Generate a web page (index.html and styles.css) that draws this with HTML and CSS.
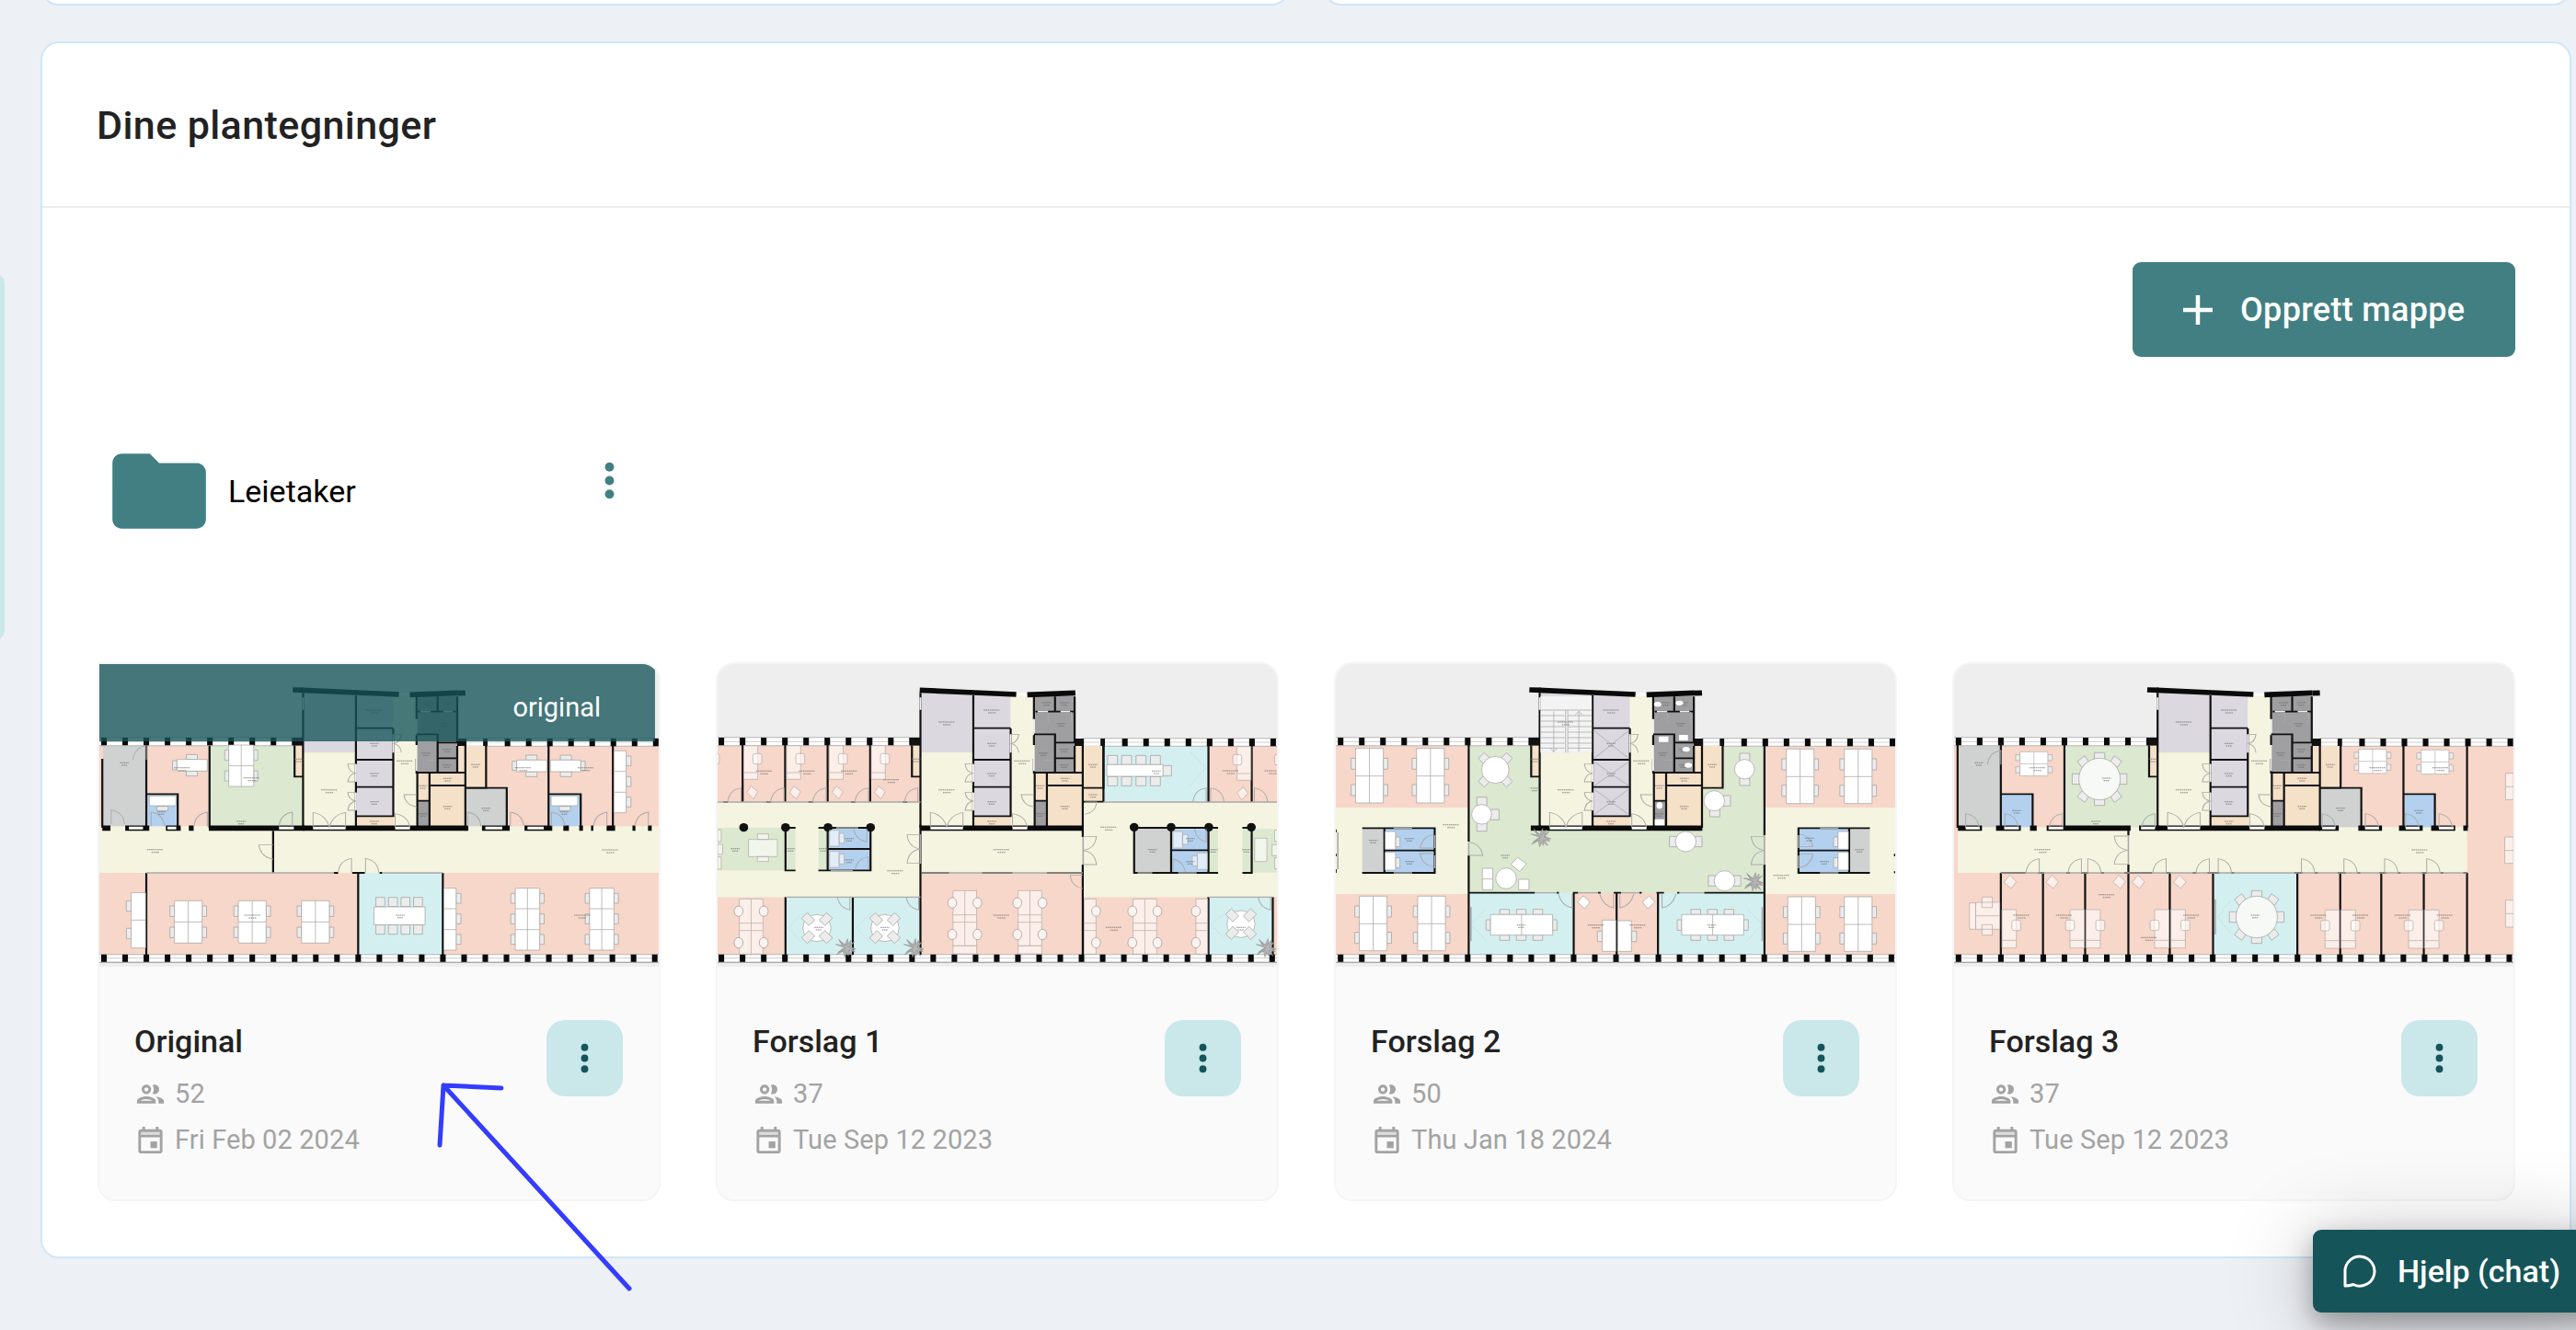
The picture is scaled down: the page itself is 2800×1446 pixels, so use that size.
FILE: index.html
```
<!DOCTYPE html>
<html lang="no">
<head>
<meta charset="utf-8">
<title>Dine plantegninger</title>
<link rel="stylesheet" href="styles.css">
</head>
<body>
<svg class="defs" width="0" height="0" aria-hidden="true">
  <defs>
    <!-- Furniture -->
    <g id="d4" class="furn">
      <path class="chair" d="M-12 17h12v34h-12zM-12 86h12v34h-12zM75 17h12v34h-12zM75 86h12v34h-12z"/>
      <path d="M0 0h75v138H0zM37.500 0v138M0 69h75"/>
    </g>
    <g id="d4t" class="furn">
      <path class="chair" d="M-12 32h12v36h-12zM-12 118h12v36h-12zM75 32h12v36h-12zM75 118h12v36h-12z"/>
      <path d="M0 0h75v178H0zM37.500 0v178M0 90h75"/>
    </g>
    <g id="d6" class="furn">
      <path class="chair" d="M-12 17h12v32h-12zM-12 84h12v32h-12zM-12 151h12v32h-12zM66 17h12v32h-12zM66 84h12v32h-12zM66 151h12v32h-12z"/>
      <path d="M0 0h66v202H0zM33 0v202M0 67h66M0 135h66"/>
    </g>
    <g id="d3" class="furn">
      <path class="chair" d="M33 17h13v32h-13zM33 84h13v32h-13zM33 151h13v32h-13z"/>
      <path d="M0 0h33v202H0zM0 67h33M0 135h33"/>
    </g>
    <g id="soft" class="furn tint">
      <path d="M0 0h64v180H0zM32 0v180M0 79h64M0 103h64"/>
      <g class="seat"><ellipse cx="-2" cy="40" rx="12" ry="17"/><ellipse cx="66" cy="40" rx="12" ry="17"/>
      <ellipse cx="-2" cy="143" rx="12" ry="17"/><ellipse cx="66" cy="143" rx="12" ry="17"/></g>
    </g>
    <g id="softHalf" class="furn tint">
      <path d="M0 0h32v180H0zM0 79h32M0 103h32"/>
      <g class="seat"><ellipse cx="32" cy="40" rx="12" ry="17"/><ellipse cx="32" cy="143" rx="12" ry="17"/></g>
    </g>
    <g id="deskH" class="furn">
      <path class="chair" d="M25-16h30v16h-30zM25 38h30v16h-30zM-12 4h12v30h-12z"/>
      <path d="M0 0h82v38H0z"/>
    </g>
    <g id="office" class="furn tint">
      <path d="M0 0h39v125H0zM0 100h39"/><rect x="27" y="34" width="24" height="34" rx="6"/>
    </g>
    <g id="cell" class="furn tint">
      <path d="M0 0h38v110H0zM0 88h38"/><rect x="25" y="26" width="24" height="34" rx="6"/>
      <path d="M8 152l12-20 18 18-12 24z"/>
    </g>
    <g id="lounge" class="furn tint"><path d="M0 24l16-24 18 22-14 22z"/></g>
    <g id="meet" class="furn">
      <path class="chair" d="M5-31h24v30H5zM39-31h24v30H39zM73-31h24v30H73zM107-31h24v30h-24zM5 59h24v30H5zM39 59h24v30H39zM73 59h24v30H73zM107 59h24v30h-24z"/>
      <path d="M0 0h138v58H0z"/>
    </g>
    <g id="meetL" class="furn">
      <path class="chair" d="M25-17h26v17H25zM70-17h26v17H70zM115-17h26v17h-26zM25 67h26v17H25zM70 67h26v17H70zM115 67h26v17h-26zM-12 17h12v34h-12zM168 17h12v34h-12z"/>
      <path d="M0 0h168v67H0zM84 0v67"/>
    </g>
    <g id="round4" class="furn">
      <path class="chair" d="M-46-38l16-18 18 22-16 20zM46-38l-16-18-18 22 16 20zM-46 38l16 18 18-22-16-20zM46 38l-16 18-18-22 16-20z"/>
      <ellipse rx="37" ry="44"/>
    </g>
    <g id="club4" class="furn">
      <ellipse rx="38" ry="44"/>
      <path class="chair" d="M-42-32l16-18 20 24-16 18zM42-32l-16-18-20 24 16 18zM-42 32l16 18 20-24-16-18zM42 32l-16 18-20-24 16-18z"/>
    </g>
    <g id="round8" class="furn tint">
      <path class="chair" d="M-14-86h28v22h-28zM-14 64h28v22h-28zM-74-17h20v34h-20zM54-17h20v34h-20zM-60-58l20-18 10 18-18 20zM60-58l-20-18-10 18 18 20zM-60 58l20 18 10-18-18-20zM60 58l-20 18-10-18 18-20z"/>
      <ellipse class="top" rx="56" ry="68"/>
    </g>
    <g id="round2" class="furn">
      <path class="chair" d="M-44-17h20v34h-20zM24-17h20v34h-20z"/><ellipse rx="28" ry="33"/>
    </g>
    <g id="booth" class="furn"><path class="chair" d="M28 18h12v32h-12z"/><path d="M0 0h28v58H0z"/></g>
    <g id="plant" class="plant">
      <path d="M0 0L-26-12-8-8-18-28-2-10 6-30 8-10 24-20 12-4 28 4 10 6 20 26 4 12-2 30-6 10-24 22-10 4z"/>
      <path d="M0 0L-16-22 2-8 16-26 10-2 26 12 8 8 8 26-2 8-20 14z"/>
    </g>
    <!-- Door leaf with its swing -->
    <path id="dr" class="door" d="M0 0v-46c-22 4-34 22-36 46"/>
    <path id="dl" class="door" d="M0 0v-46c22 4 34 22 36 46"/>
    <path id="dd" class="door" d="M0-46h-36c2 24 14 42 36 46M0 46h-36c2-24 14-42 36-46"/>
    <path id="lb" class="label" d="M-22 0h44M-10 9h22"/>
    <path id="ls" class="label" d="M-12 0h24M-8 8h16"/>

    <!-- Outer walls shared by every storey -->
    <g id="shell">
      <path class="glass" d="M-30 275H573v27H-30zM1013 278H1640v26H1013zM-30 983H1640v26H-30z"/>
      <path class="thin" d="M-30 289H573M1013 291H1640M-30 995H1640"/>
      <path class="pillars" d="M27 288.500H560M1118.500 291.500H1640M27 995.500H1640"/>
      <path class="base" d="M-30 1009H1640"/>
      <path class="fill-wall" d="M546 276h27v26h-27zM988 279h27v24h-27zM1060 279h12v24h-12z"/>
    </g>
    <!-- Stair and lift core -->
    <g id="core">
      <path class="lilac" d="M573 128L715 136V325H573zM715 138H817V532H715z"/>
      <path class="cream" d="M573 325H715V570H573zM817 142H882V570H817z"/>
      <path class="dark" d="M882 140H990V292H937V390H882zM937 292H990V390H937zM883 483H915V565H883z"/>
      <path class="tan" d="M718 535H817V565H718zM883 392H913V480H883zM918 392H1012V565H918zM990 303H1012V390H990zM1013 303H1068V440H1013zM550 302H571V402H550z"/>
      <path class="wall" d="M573 130V570M716 138V570M716 245H817M817 246V348H716M716 437H817V350M817 437V532H716M880 142V215M880 265H937V292H990V142M937 142V190M884 191H990M937 292V388M937 343H990M880 268V300M880 345V390H1012M915 390V570M918 432H1012M882 392V570M882 482H913M990 303V390M1012 303V570M1013 440H1068V303M550 302V403H573"/>
      <path class="light" d="M573 145v40M817 265v60M880 216v44M880 345v40M890 191h28M952 191h26M716 362v58M716 455v58"/>
      <path class="slab" d="M573 571H1013"/>
      <path class="opening" d="M600 571h88M822 571h40"/>
      <path class="roof" d="M571 121L718 129 832 135M862 136L992 130"/>
      <path class="opening" d="M834 135h26"/>
      <path class="door" d="M600 566v-46c22 4 40 22 44 50 4-28 22-46 44-50v46M716 362h-22c2 20 10 28 22 30-12 2-20 10-22 28h22M716 455h-22c2 18 10 26 22 28-12 2-20 10-22 30h22M817 265h22c-2 18-10 28-22 30 12 2 20 10 22 30M822 568v-44c22 4 36 18 40 44M880 462h-34c2 22 14 36 34 40M918 196v30M981 192v32M908 256h-24M932 350h-24"/>
      <use href="#lb" x="766" y="186"/><use href="#ls" x="766" y="295"/><use href="#ls" x="766" y="393"/><use href="#ls" x="766" y="485"/>
      <use href="#lb" x="644" y="446"/><use href="#lb" x="848" y="352"/><use href="#ls" x="766" y="549"/><use href="#ls" x="897" y="433"/><use href="#ls" x="964" y="409"/><use href="#ls" x="964" y="500"/><use href="#ls" x="954" y="230"/><use href="#ls" x="906" y="326"/><use href="#ls" x="962" y="314"/><use href="#ls" x="962" y="365"/><use href="#ls" x="897" y="524"/><use href="#ls" x="914" y="162"/><use href="#ls" x="962" y="162"/><use href="#ls" x="1040" y="364"/><use href="#ls" x="561" y="346"/>
    </g>
    <path id="eaves" class="roof" d="M543 120L573 121M990 131L1010 130"/>

    <!-- UI icons -->
    <symbol id="i-more" viewBox="0 0 24 24"><circle cx="12" cy="6" r="2"/><circle cx="12" cy="12" r="2"/><circle cx="12" cy="18" r="2"/></symbol>
    <symbol id="i-people" viewBox="0 0 24 24"><path d="M9 13.750c-2.340 0-7 1.170-7 3.500V19h14v-1.750c0-2.330-4.660-3.500-7-3.500zM4.340 17c.84-.58 2.870-1.250 4.660-1.250s3.820.67 4.660 1.250H4.340zM9 12c1.930 0 3.500-1.570 3.500-3.500S10.930 5 9 5 5.500 6.570 5.500 8.500 7.070 12 9 12zm0-5c.83 0 1.500.67 1.500 1.500S9.830 10 9 10s-1.500-.67-1.500-1.500S8.170 7 9 7zm7.040 6.810c1.160.84 1.960 1.960 1.960 3.440V19h4v-1.750c0-2.020-3.500-3.170-5.960-3.440zM15 12c1.930 0 3.500-1.570 3.500-3.500S16.930 5 15 5c-.54 0-1.040.13-1.500.35.63.89 1 1.980 1 3.150s-.37 2.260-1 3.150c.46.22.96.35 1.500.35z"/></symbol>
    <symbol id="i-event" viewBox="0 0 24 24"><path opacity=".35" d="M5 6h14v2H5z"/><path d="M12 13h5v5h-5zM19 4h-1V2h-2v2H8V2H6v2H5c-1.110 0-1.990.9-1.990 2L3 20c0 1.100.89 2 2 2h14c1.100 0 2-.9 2-2V6c0-1.100-.9-2-2-2zm0 16H5V10h14v10zm0-12H5V6h14v2z"/></symbol>
  </defs>
</svg>

<div class="side-tab"></div>
<main class="page">
  <div class="top-cards"><div class="top-card"></div><div class="top-card"></div></div>

  <section class="panel">
    <header class="panel-head"><h2>Dine plantegninger</h2></header>
    <div class="panel-body">
      <div class="toolbar">
        <button class="create">
          <svg class="plus" viewBox="0 0 32 32"><path d="M16 0v32M0 16h32"/></svg>
          <span>Opprett mappe</span>
        </button>
      </div>

      <div class="folder">
        <svg class="folder-icon" viewBox="0 0 24 24"><path d="M10 4H4c-1.100 0-1.990.9-1.990 2L2 18c0 1.100.9 2 2 2h16c1.100 0 2-.9 2-2V8c0-1.100-.9-2-2-2h-8l-2-2z"/></svg>
        <span class="folder-name">Leietaker</span>
        <svg class="folder-more"><use href="#i-more"/></svg>
      </div>

      <div class="cards">
        <article class="card first">
          <div class="thumb">
            <svg class="plan" viewBox="20 36 1513 987" preserveAspectRatio="none">
              <path class="pink" d="M0 302H1600V570H0zM0 717H1600V984H0z"/>
              <path class="cream" d="M0 565H1600V717H0z"/>
              <path class="gray" d="M30 302H147V565H30zM1011 440H1122V565H1011z"/>
              <path class="blue" d="M148 460H232V565H148zM1236 460H1322V565H1236z"/>
              <path class="green" d="M318 302H571V565H318z"/>
              <path class="cyan" d="M720 717H949V984H720z"/>
              <use href="#shell" x="-2"/><use href="#core" x="-2"/><use href="#eaves"/>
              <path class="slab" d="M28 571H50M90 571H155M200 571H240M262 571H275M316 571H575M1009 571H1018M1055 571H1130M1170 571H1245M1275 571H1290M1318 571H1328M1350 571H1356M1392 571H1415M1462 571H1470M1504 571H1514"/>
              <path class="opening" d="M100 571h38M204 571h24M506 571h40M1064 571h46M1178 571h44"/>
              <path class="wall" d="M28 345V570M147 290V565M148 460H232V565M318 302V570M1011 440H1122V565M1235 303V565M1236 460H1322V565M1409 303V570M490 580V717M147 984V717M720 717V984M949 717V984M654 717h12M704 717h34M778 717h8"/>
              <path class="frame" d="M147 717H655M784 717H949"/>
              <use href="#d4" transform="translate(370 300) scale(.9 .98)"/>
              <use href="#deskH" x="230" y="347"/><use href="#deskH" x="1149" y="349"/>
              <use href="#deskH" transform="translate(1322 349) scale(-1 1)"/>
              <g class="furn"><path class="chair" d="M176 500h30v14h-30zM1264 500h30v14h-30z"/><path d="M155 466h72v32h-72zM1242 466h72v32h-72z"/></g>
              <use href="#d3" x="1412" y="319"/>
              <g class="furn"><path class="chair" d="M93 808h13v34h-13zM93 898h13v34h-13z"/><path d="M106 782h39v180h-39zM106 871h39"/></g>
              <use href="#d4" x="223" y="808"/><use href="#d4" x="396" y="808"/><use href="#d4" x="567" y="808"/>
              <use href="#meet" x="763" y="828"/>
              <use href="#d3" x="952" y="767"/><use href="#d6" x="1145" y="767"/><use href="#d6" x="1346" y="767"/>
              <use href="#dl" x="52" y="558"/><use href="#dr" x="147" y="348"/><use href="#dl" x="160" y="565"/><use href="#dr" x="312" y="565"/><use href="#dr" x="542" y="565"/><use href="#dl" x="1016" y="565"/><use href="#dl" x="1132" y="565"/><use href="#dl" x="1243" y="565"/><use href="#dr" x="1393" y="565"/><use href="#dr" x="1505" y="565"/><use href="#dr" x="702" y="716"/><use href="#dl" x="740" y="716"/>
              <path class="door" d="M490 626h-39c4 26 16 42 39 46"/>
              <use href="#ls" x="88" y="358"/><use href="#lb" x="432" y="407"/><use href="#ls" x="404" y="549"/><use href="#lb" x="171" y="641"/><use href="#lb" x="1402" y="642"/><use href="#lb" x="434" y="855"/><use href="#ls" x="834" y="855"/><use href="#lb" x="1326" y="855"/><use href="#ls" x="1066" y="506"/><use href="#lb" x="244" y="374"/><use href="#lb" x="1166" y="374"/><use href="#lb" x="1336" y="374"/><use href="#ls" x="188" y="518"/><use href="#ls" x="1278" y="518"/>
            </svg>
            <div class="ribbon">original</div>
          </div>
          <div class="info">
            <div class="text"><h3>Original</h3>
              <p class="meta"><svg><use href="#i-people"/></svg>52</p>
              <p class="meta"><svg><use href="#i-event"/></svg>Fri Feb 02 2024</p></div>
            <button class="more"><svg><use href="#i-more"/></svg></button>
          </div>
        </article>

        <article class="card">
          <div class="thumb">
            <svg class="plan" viewBox="24.300 36 1513 987" preserveAspectRatio="none">
              <path class="pink" d="M0 302H573V486H0zM1352 303H1600V486H1352zM0 796H208V984H0zM575 718H1012V984H575zM1013 796H1352V984H1013zM1526 796H1600V984H1526z"/>
              <path class="cream" d="M0 486H573V796H0zM573 570H1013V717H573zM1013 440H1352V796H1013zM1352 486H1600V796H1352z"/>
              <path class="green" d="M0 570H235V709H0zM297 570H322V709H297zM1352 574H1378V716H1352zM1444 574H1600V716H1444z"/>
              <path class="cyan" d="M208 796H573V984H208zM1070 303H1352V484H1070zM1352 796H1526V984H1352z"/>
              <path class="blue" d="M324 572H438V709H324zM1252 574H1352V716H1252z"/>
              <path class="gray" d="M1151 572H1251V716H1151z"/>
              <path class="tan" d="M1014 442H1068V483H1014z"/>
              <use href="#shell"/><use href="#core"/>
              <path class="wall" d="M92 300V486M207 300V486M322 300V486M437 300V486M1068 303V485H1013M1352 303V486M1469 303V486M573 560V984M1012 570V600M1012 690V984M575 717H650M740 717H822M915 717H1012M208 984V796M390 796V984M1352 984V796M1526 796V984M235 570H208V709H235M297 570H438V709H297M322 570V709M324 639H438M1151 570H1352V717H1151zM1251 570V717M1252 643H1352M1352 570H1378M1352 717H1378M1444 570H1469V717H1444M40 486h12M156 486h12M270 486h12M385 486h12M525 486h12"/>
              <path class="frame" d="M24 486H573M1068 486H1537M208 796H573M1352 796H1526M575 717H1012M573 592v95M1013 600v90M345 570h60M330 709h60M1160 717h40M1270 717h50"/>
              <g class="fill-wall"><ellipse cx="95" cy="569" rx="12" ry="14"/><ellipse cx="208" cy="569" rx="12" ry="14"/><ellipse cx="323" cy="569" rx="12" ry="14"/><ellipse cx="438" cy="569" rx="12" ry="14"/><ellipse cx="1151" cy="568" rx="12" ry="14"/><ellipse cx="1251" cy="568" rx="12" ry="14"/><ellipse cx="1353" cy="568" rx="12" ry="14"/><ellipse cx="1468" cy="568" rx="12" ry="14"/></g>
              <use href="#cell" x="-20" y="302"/><use href="#cell" x="95" y="302"/><use href="#cell" x="211" y="302"/><use href="#cell" x="326" y="302"/><use href="#cell" x="440" y="302"/>
              <use href="#cell" transform="translate(1467 305) scale(-1 1)"/><use href="#cell" transform="translate(1580 305) scale(-1 1)"/>
              <g class="furn"><path class="chair" d="M1079 334h27v30h-27zM1117 334h27v30h-27zM1156 334h27v30h-27zM1195 334h27v30h-27zM1079 403h27v30h-27zM1117 403h27v30h-27zM1156 403h27v30h-27zM1195 403h27v30h-27zM1228 367h24v34h-24z"/><path d="M1077 364h152v38h-152z"/></g>
              <g class="furn tint"><path d="M108 608h78v56h-78zM132 590h30v18h-30zM132 664h30v16h-30zM24 577h10v38H24zM24 624h14v32H24zM24 665h10v40H24zM1477 604h33v76h-33zM1531 578h12v36h-12zM1524 625h20v36h-20zM1531 668h12v36h-12z"/></g>
              <g class="furn tint"><path d="M327 578h26v52h-26zM353 588h14v32h-14zM327 647h26v52h-26zM353 656h14v32h-14zM1256 582h26v54h-26zM1282 592h14v32h-14zM1322 652h27v54h-27zM1308 662h14v32h-14z"/></g>
              <use href="#soft" x="83" y="802"/><use href="#soft" x="661" y="775"/><use href="#soft" x="837" y="775"/><path class="furn tint" d="M661 955h64v26h-64zM837 955h64v26h-64z"/>
              <use href="#softHalf" x="1016" y="802"/><use href="#soft" x="1148" y="802"/><use href="#softHalf" transform="translate(1350 802) scale(-1 1)"/>
              <use href="#club4" x="293" y="897"/><use href="#club4" x="477" y="897"/><use href="#club4" x="1440" y="884"/>
              <path class="sight" d="M252 850L216 896 252 945M436 850L400 896 436 945M1305 325L1345 375 1305 430M1395 850L1360 884 1395 935"/>
              <use href="#plant" x="370" y="962"/><use href="#plant" x="554" y="962"/><use href="#plant" x="1507" y="962"/>
              <use href="#dr" x="88" y="486"/><use href="#dr" x="204" y="486"/><use href="#dr" x="318" y="486"/><use href="#dr" x="432" y="486"/><use href="#dr" x="566" y="486"/><use href="#dr" x="1346" y="486"/><use href="#dl" x="1358" y="486"/><use href="#dl" x="1476" y="486"/>
              <use href="#dd" x="573" y="639"/><use href="#dd" transform="translate(1013 644) scale(-1 1)"/>
              <path class="door" d="M382 796v42c-20-4-30-20-34-42M568 796v42c-20-4-30-20-34-42M1520 796v42c-20-4-30-20-34-42M1012 724h-34c2 24 14 40 34 44M1018 486h32c-2 22-14 36-32 40M428 574v42c-20-4-32-20-36-42M432 706v-42c-20 4-32 20-36 42M1346 574v42c-18-4-28-20-32-42M1256 714v-42c20 4 30 20 34 42"/>
              <use href="#lb" x="644" y="225"/><use href="#lb" x="792" y="641"/><use href="#lb" x="792" y="855"/><use href="#lb" x="1096" y="895"/><use href="#lb" x="505" y="710"/><use href="#lb" x="1082" y="568"/><use href="#ls" x="72" y="638"/><use href="#ls" x="222" y="638"/><use href="#ls" x="310" y="638"/><use href="#ls" x="380" y="605"/><use href="#ls" x="380" y="675"/><use href="#ls" x="1201" y="641"/><use href="#ls" x="1303" y="605"/><use href="#ls" x="1303" y="680"/><use href="#ls" x="1365" y="641"/><use href="#ls" x="1455" y="641"/><use href="#ls" x="298" y="895"/><use href="#ls" x="477" y="895"/><use href="#ls" x="1440" y="895"/><use href="#ls" x="1211" y="385"/><use href="#ls" x="1040" y="462"/><use href="#lb" x="150" y="385"/><use href="#lb" x="266" y="385"/><use href="#lb" x="380" y="385"/><use href="#lb" x="494" y="413"/><use href="#lb" x="1412" y="384"/><use href="#lb" x="1526" y="384"/>
            </svg>
          </div>
          <div class="info">
            <div class="text"><h3>Forslag 1</h3>
              <p class="meta"><svg><use href="#i-people"/></svg>37</p>
              <p class="meta"><svg><use href="#i-event"/></svg>Tue Sep 12 2023</p></div>
            <button class="more"><svg><use href="#i-more"/></svg></button>
          </div>
        </article>

        <article class="card">
          <div class="thumb">
            <svg class="plan" viewBox="28.600 36 1513 987" preserveAspectRatio="none">
              <path class="pink" d="M0 302H388V504H0zM1188 303H1600V504H1188zM0 786H388V984H0zM1188 786H1600V984H1188zM672 783H900V984H672z"/>
              <path class="cream" d="M0 504H388V786H0zM1188 504H1600V786H1188z"/>
              <path class="green" d="M388 302H579V570H1020V303H1188V783H388z"/>
              <path class="cyan" d="M388 783H672V984H388zM900 783H1188V984H900z"/>
              <path class="blue" d="M160 572H296V716H160zM1281 572H1417V716H1281z"/>
              <path class="gray" d="M100 572H160V716H100zM1417 572H1473V716H1417z"/>
              <use href="#shell" x="7"/><use href="#core" x="7"/><use href="#eaves" x="9"/>
              <path class="stair" d="M582 140H721V325H582z"/>
              <path class="thin stairs" d="M582 186H721M650 186V325M656 186V325M618 190V322L608 310M618 322L628 310M686 322V190L676 202M686 190L696 202M582 204h66M582 222h66M582 240h66M582 258h66M582 276h66M582 294h66M582 310h66M656 204h65M656 222h65M656 240h65M656 258h65M656 276h65M656 294h65M656 310h65M726 252L822 345M822 252L726 345M726 354L822 434M822 354L726 434M726 443L822 528M822 443L726 528"/>
              <g class="white"><ellipse cx="899" cy="167" rx="10" ry="8"/><ellipse cx="958" cy="163" rx="10" ry="8"/><ellipse cx="976" cy="314" rx="10" ry="8"/><ellipse cx="982" cy="366" rx="10" ry="8"/><ellipse cx="904" cy="497" rx="8" ry="11"/><path d="M902 272h26v18h-26zM957 267h24v18h-24zM891 542h26v20h-26z"/></g>
              <path class="wall" d="M388 290V615M388 660V984M1188 290V595M1188 690V984M388 782H567M626 782H632M670 782H684M738 782H745M780 782H800M850 782H856M896 782H916M952 782H958M1025 782H1188M672 783V984M788 783V984M900 783V984M100 571H296V717H100M160 571V717M160 644H296M1473 571H1280V717H1473M1417 571V717M1281 644H1417M28 575v10M28 655v8M28 705v12M1541 655v8M1541 712v6"/>
              <path class="slab" d="M556 571H584"/>
              <path class="frame" d="M567 782H626M684 782H738M800 782H850M958 782H1025M185 571h50M185 717h50M1338 571h50M1338 717h50M296 594v42M296 660v42M1280 594v42M1280 660v42M388 618v42M1188 598v92M34 585v120M394 828v112M1182 828v112"/>
              <use href="#d4t" x="82" y="311"/><use href="#d4t" x="247" y="311"/><use href="#d4t" x="92" y="793"/><use href="#d4t" x="250" y="793"/>
              <use href="#d4t" x="1247" y="313"/><use href="#d4t" x="1404" y="313"/><use href="#d4t" x="1251" y="795"/><use href="#d4t" x="1404" y="795"/>
              <use href="#booth" x="162" y="582"/><use href="#booth" x="162" y="650"/><use href="#booth" transform="translate(1415 582) scale(-1 1)"/><use href="#booth" transform="translate(1415 650) scale(-1 1)"/>
              <use href="#round4" x="460" y="381"/>
              <g class="furn"><path class="chair" d="M410 470h27v28h-27zM410 553h27v28h-27zM448 510h22v34h-22zM1121 327h27v24h-27zM1121 408h27v24h-27zM1076 465h20v34h-20zM1040 510h27v24h-27z"/><ellipse cx="423" cy="526" rx="27" ry="32"/><ellipse cx="1134" cy="379" rx="27" ry="32"/><ellipse cx="1052" cy="482" rx="28" ry="33"/><ellipse cx="489" cy="735" rx="28" ry="34"/><path d="M425 702h28v70h-28zM425 737h28M523 738h28v34h-28zM502 689l18-22 24 20-18 26z"/></g>
              <use href="#round2" x="975" y="615"/><use href="#round2" x="1080" y="743"/>
              <use href="#meetL" x="447" y="853"/><use href="#meetL" x="964" y="853"/>
              <path class="sight" d="M434 835L394 885 434 938M1142 835L1182 885 1142 938"/>
              <g class="furn"><path class="chair" d="M736 907h13v34h-13zM829 907h13v34h-13z"/><path d="M749 871h37v102h-37zM791 873h37v100h-37zM682 812l16-20 18 20-14 22zM892 812l-16-20-18 20 14 22z"/></g>
              <use href="#plant" x="582" y="602"/><use href="#plant" x="1158" y="746"/>
              <use href="#dd" x="1188" y="644"/>
              <path class="door" d="M388 660h38c-4-24-16-40-38-43M668 785v46c-20-4-32-20-38-46M780 785v46c-20-4-32-20-38-46M797 785v46c20-4 32-20 38-46M911 785v46c20-4 32-20 38-46M294 636h-38c4-26 16-40 38-44M294 654h-38c4 26 16 40 38 44M1283 632h36c-4-24-16-38-36-42M1283 656h36c-4 26-16 40-36 44"/>
              <use href="#lb" x="650" y="225"/><use href="#lb" x="340" y="560"/><use href="#ls" x="130" y="611"/><use href="#ls" x="228" y="605"/><use href="#ls" x="228" y="680"/><use href="#ls" x="487" y="660"/><use href="#ls" x="530" y="887"/><use href="#ls" x="1045" y="887"/><use href="#lb" x="732" y="887"/><use href="#lb" x="845" y="887"/><use href="#ls" x="567" y="441"/><use href="#ls" x="1310" y="604"/><use href="#ls" x="1350" y="680"/><use href="#ls" x="1445" y="641"/><use href="#lb" x="1234" y="725"/>
            </svg>
          </div>
          <div class="info">
            <div class="text"><h3>Forslag 2</h3>
              <p class="meta"><svg><use href="#i-people"/></svg>50</p>
              <p class="meta"><svg><use href="#i-event"/></svg>Thu Jan 18 2024</p></div>
            <button class="more"><svg><use href="#i-more"/></svg></button>
          </div>
        </article>

        <article class="card">
          <div class="thumb">
            <svg class="plan" viewBox="34.500 36 1513 987" preserveAspectRatio="none">
              <path class="pink" d="M0 302H1600V984H0z"/>
              <path class="cream" d="M45 568H1422V717H45z"/>
              <path class="gray" d="M45 302H161V568H45zM1026 440H1136V568H1026z"/>
              <path class="blue" d="M162 461H247V568H162zM1251 461H1335V568H1251z"/>
              <path class="green" d="M333 302H584V568H333z"/>
              <path class="cyan" d="M735 718H963V984H735z"/>
              <use href="#shell" x="12"/><use href="#core" x="12"/><use href="#eaves" x="14"/>
              <path class="slab" d="M45 571H110M148 571H215M240 571H258M285 571H512M535 571H590M1020 571H1075M1128 571H1192M1238 571H1302M1325 571H1390M1412 571H1424"/>
              <path class="opening" d="M66 571h38M170 571h40M290 571h40M540 571h38M1030 571h36M1146 571h38M1256 571h38M1346 571h40"/>
              <path class="wall" d="M44 300V570M161 290V565M162 460H247V565M333 290V575M1025 440H1136V565M1250 303V565M1250 460H1335V565M1422 303V570M506 575V595M506 690V717M161 984V717M275 717V984M389 717V984M506 717V984M618 717V984M735 717V984M963 717V984M1079 717V984M1190 717V984M1305 717V984M1422 717V984M161 717H228M262 717h16M338 717h10M378 717h20M432 717h8M495 717h75M608 717h12M680 717h10M720 717h32M784 717h8M955 717h22M1010 717h8M1072 717h22M1125 717h8M1185 717h18M1234 717h8M1300 717h14M1350 717h8M1412 717h10"/>
              <path class="frame" d="M161 717H1422M506 595V690M741 803V918"/>
              <use href="#d4" transform="translate(213 322) scale(1 .57)"/><use href="#d4" transform="translate(1129 314) scale(1 .57)"/><use href="#d4" transform="translate(1298 316) scale(1 .57)"/>
              <use href="#round8" x="428" y="411"/><use href="#round8" x="853" y="861"/>
              <g class="furn tint"><path d="M93 813h65v88H93zM93 857h65M76 815h17v86H76zM110 796h28v34h-28zM110 886h28v34h-28zM1526 392h22v86h-22zM1526 436h22M1524 600h24v86h-24zM1524 644h24M1526 806h22v88h-22zM1526 850h22"/></g>
              <use href="#office" x="164" y="837"/><use href="#office" transform="translate(387 837) scale(-1 1)"/><use href="#office" x="391" y="837"/><use href="#office" transform="translate(616 837) scale(-1 1)"/><use href="#office" x="621" y="837"/>
              <use href="#office" transform="translate(1077 838) scale(-1 1)"/><use href="#office" x="1081" y="838"/><use href="#office" transform="translate(1303 838) scale(-1 1)"/><use href="#office" x="1307" y="838"/>
              <use href="#lounge" x="169" y="724"/><use href="#lounge" x="283" y="724"/><use href="#lounge" x="464" y="724"/><use href="#lounge" x="516" y="724"/><use href="#lounge" x="628" y="724"/>
              <path class="sight" d="M782 808L748 861 782 912"/>
              <use href="#dl" x="66" y="570"/><use href="#dr" x="161" y="364"/><use href="#dl" x="172" y="570"/><use href="#dr" x="328" y="570"/><use href="#dr" x="578" y="570"/><use href="#dl" x="1030" y="570"/><use href="#dl" x="1147" y="570"/><use href="#dl" x="1256" y="570"/><use href="#dl" x="1346" y="570"/>
              <use href="#dr" x="265" y="717"/><use href="#dr" x="379" y="717"/><use href="#dl" x="396" y="717"/><use href="#dr" x="608" y="717"/><use href="#dr" x="725" y="717"/><use href="#dl" x="749" y="717"/><use href="#dl" x="974" y="717"/><use href="#dl" x="1089" y="717"/><use href="#dl" x="1199" y="717"/><use href="#dl" x="1313" y="717"/>
              <use href="#dd" x="504" y="643"/>
              <use href="#lb" x="656" y="225"/><use href="#ls" x="102" y="358"/><use href="#lb" x="260" y="374"/><use href="#ls" x="447" y="408"/><use href="#ls" x="418" y="549"/><use href="#ls" x="204" y="514"/><use href="#lb" x="274" y="641"/><use href="#lb" x="1294" y="642"/><use href="#lb" x="447" y="788"/><use href="#lb" x="217" y="855"/><use href="#lb" x="332" y="855"/><use href="#lb" x="562" y="928"/><use href="#lb" x="676" y="855"/><use href="#ls" x="849" y="855"/><use href="#lb" x="1020" y="855"/><use href="#lb" x="1134" y="855"/><use href="#lb" x="1248" y="855"/><use href="#lb" x="1362" y="855"/><use href="#ls" x="1080" y="506"/><use href="#ls" x="1292" y="514"/><use href="#lb" x="1180" y="374"/><use href="#lb" x="1350" y="374"/>
            </svg>
          </div>
          <div class="info">
            <div class="text"><h3>Forslag 3</h3>
              <p class="meta"><svg><use href="#i-people"/></svg>37</p>
              <p class="meta"><svg><use href="#i-event"/></svg>Tue Sep 12 2023</p></div>
            <button class="more"><svg><use href="#i-more"/></svg></button>
          </div>
        </article>
      </div>
    </div>
  </section>
</main>

<svg class="arrow" viewBox="0 0 220 236"><path d="M214 229L12 8M75 11L12 8 8 73"/></svg>

<button class="chat">
  <svg viewBox="0 0 38 38"><path d="M3 35V20A16 16 0 1 1 12 33.500Q8 35 3 35z"/></svg>
  <span>Hjelp (chat)</span>
</button>
</body>
</html>
```
FILE: styles.css
```
* { box-sizing: border-box; }
body {
  margin: 0;
  width: 2800px;
  height: 1446px;
  overflow: hidden;
  background: #edf0f5;
  font-family: Roboto, "Liberation Sans", sans-serif;
  color: #222;
}
h2, h3, p { margin: 0; font-weight: 500; }
button { border: 0; font: inherit; }
.defs { position: absolute; }

.page { padding: 0 5px 0 44px; }
.top-cards { display: grid; grid-template-columns: 1fr 1fr; gap: 36px; height: 6px; margin-bottom: 39px; }
.top-card { height: 40px; margin-top: -34px; background: #fff; border: 2px solid #d0e6f8; border-radius: 20px; }
.side-tab { position: absolute; left: -20px; top: 296px; width: 25px; height: 401px; background: #cae7ea; border-radius: 20px; }

.panel { height: 1323px; background: #fff; border: 2px solid #d0e6f8; border-radius: 20px; }
.panel-head { height: 179px; padding: 0 60px 0 59px; display: flex; align-items: center; border-bottom: 2px solid #ededed; }
.panel-head h2 { font-size: 43px; line-height: 48px; letter-spacing: .4px; }
.panel-body { padding: 59px 59px 0 60px; }

.toolbar { display: flex; justify-content: flex-end; }
.create {
  width: 416px; height: 103px; padding: 0 0 0 55px;
  display: flex; align-items: center; gap: 30px;
  background: #417f82; color: #fff; border-radius: 9px;
  font-size: 36px; font-weight: 500; letter-spacing: .3px;
}
.plus { width: 32px; height: 32px; stroke: #fff; stroke-width: 4.500; }

.folder { display: flex; align-items: center; height: 122px; width: 612px; margin-top: 85px; padding-left: 6px; }
.folder-icon { width: 122px; height: 122px; fill: #417f82; }
.folder-name { margin-left: 14px; font-size: 34px; color: #000; }
.folder-more { width: 59px; height: 59px; margin: 0 26px 24px auto; fill: #417f82; }

.cards { display: grid; grid-template-columns: repeat(4, 1fr); gap: 60px; margin-top: 125px; }
.card { height: 586px; background: #fafafa; border: 2px solid #f5f5f5; border-radius: 20px; overflow: hidden; }
.card.first { border-top-left-radius: 0; }
.thumb { position: relative; height: 329px; background: #eee; }
.plan { display: block; width: 100%; height: 100%; }
.ribbon {
  position: absolute; left: 0; top: 0; width: 604px; height: 84px;
  padding: 22px 59px 0 0; text-align: right;
  background: rgba(20, 85, 90, .78); color: #fff; font-size: 29px; line-height: 50px;
}
.info { display: flex; justify-content: space-between; padding: 58px 39px 0 38px; }
.info h3 { font-size: 34px; line-height: 46px; }
.meta { display: flex; align-items: center; gap: 9px; height: 50px; font-size: 29px; font-weight: 400; letter-spacing: .1px; color: #a3a3a3; }
.text h3 + .meta { margin-top: 9px; }
.meta svg { width: 35px; height: 35px; fill: #a3a3a3; }
.more {
  width: 83px; height: 83px; padding: 0; display: flex; align-items: center; justify-content: center;
  background: #cae7ea; border-radius: 20px;
}
.more svg { width: 47px; height: 47px; fill: #14555a; }

.chat {
  position: absolute; left: 2514px; top: 1337px; width: 320px; height: 90px; padding: 0 0 0 32px;
  display: flex; align-items: center; gap: 22px;
  background: #15555a; color: #fff; border-radius: 9px;
  font-size: 34px; font-weight: 500;
  box-shadow: 0 8px 90px rgba(0, 0, 0, .25), 0 12px 28px rgba(0, 0, 0, .3);
}
.chat svg { width: 38px; height: 38px; fill: none; stroke: #fff; stroke-width: 3; stroke-linejoin: round; }
.arrow {
  position: absolute; left: 470px; top: 1172px; width: 220px; height: 236px;
  fill: none; stroke: #343cff; stroke-width: 5; stroke-linecap: round; stroke-linejoin: round;
}

/* Floor plans */
.pink { fill: #f7d7c9; }
.green { fill: #dce8d0; }
.cream { fill: #f5f4e0; }
.lilac { fill: #dcd8e0; }
.cyan { fill: #d4eff0; }
.blue { fill: #b3d1ef; }
.gray { fill: #d0d2d2; }
.tan { fill: #f5e0c8; }
.dark { fill: #9f9fa1; }
.stair { fill: #f3f3f3; }
.white, .furn { fill: #fff; }
.furn { stroke: #a5a5a5; stroke-width: 2; }
.tint { fill: rgba(255, 255, 255, .6); stroke: #b5aca8; }
.furn .chair { fill: #ececec; stroke: #a0a0a0; }
.tint .seat { fill: #fbf3ef; stroke: #9a9a9a; }
.tint .top { fill: #f6f9f6; stroke: #a5a5a5; }
.fill-wall { fill: #111; }
.wall { fill: none; stroke: #111; stroke-width: 5.500; }
.slab { fill: none; stroke: #0a0a0a; stroke-width: 17; }
.roof { fill: none; stroke: #0a0a0a; stroke-width: 17; }
.opening { fill: none; stroke: #fff; stroke-width: 9; }
.light { fill: none; stroke: #eee; stroke-width: 5; }
.frame { fill: none; stroke: #a8a8a8; stroke-width: 4; }
.glass { fill: #fff; stroke: #b5b5b5; stroke-width: 3; }
.thin { fill: none; stroke: #bbb; stroke-width: 2; }
.stairs { stroke: #a5a5a5; }
.pillars { fill: none; stroke: #0a0a0a; stroke-width: 25; stroke-dasharray: 15 42.300; }
.base { fill: none; stroke: #aaa; stroke-width: 4; }
.door { fill: none; stroke: #aaa; stroke-width: 2.500; }
.sight { fill: none; stroke: #b9cfd0; stroke-width: 2; stroke-dasharray: 4 4; }
.label { fill: none; stroke: #666; stroke-opacity: .75; stroke-width: 3; stroke-dasharray: 4 1.500; }
.plant { fill: #b5b5b5; stroke: #8c8c8c; stroke-width: 1.500; }
```
